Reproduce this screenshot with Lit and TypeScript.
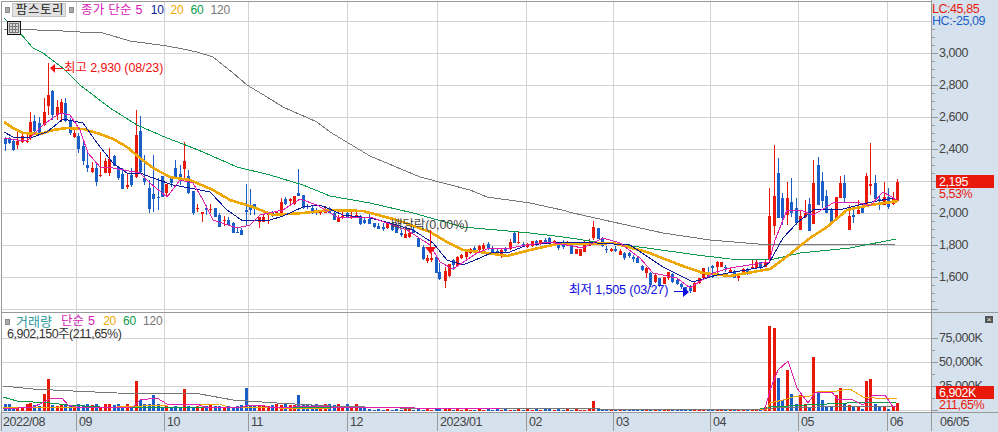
import { LitElement, html, css, svg } from "lit";
import { customElement } from "lit/decorators.js";

const RED = "#e8190a", BLUE = "#1a5fc8", ORANGE = "#f0a800", GREEN = "#0a9a4a", NAVY = "#0a1a9a", PINK = "#e020b0", GRAY = "#777777";

type Section = { ox: number; oy: number; rows: string };
const SECTIONS: Section[] = [
  { ox: 0, oy: 90, rows: "14 b 143 162 140 182;26 b 147 158 140 163;38 b 152 180 150 182;52 r 153 164 120 178;65 r 138 156 130 160;80 r 152 154 130 160;91 r 97 145 67 150;103 b 93 122 75 125;118 b 99 130 80 130;131 r 67 105 25 108;211 b 90 130 85 135;223 r 128 142 120 145;235 b 138 177 130 190;250 b 167 212 150 225;262 b 225 233 180 245;277 r 233 247 215 250;289 b 233 275 222 288;301 r 255 258 185 262;316 r 212 248 205 250;328 r 208 248 175 258;343 b 198 227 195 228;355 b 230 263 228 270;367 b 252 296 235 296;382 r 285 290 250 296;394 b 255 285 235 290;409 r 135 262 60 265;421 b 122 247 78 250;433 b 264 275 195 285;448 b 295 356 270 368;460 b 312 326 195 365;475 b 320 325 265 360;487 b 257 320 257 320;499 r 282 310 282 322;514 b 263 278 258 290;526 b 235 262 210 265;541 b 252 262 225 285;553 r 213 238 155 268;565 b 258 308 240 312;580 b 303 368 303 375;592 r 355 357 342 365" },
  { ox: 0, oy: 0, rows: "145 r 285 318 190 345;157 b 272 345 270 360;170 r 320 345 300 360;184 r 305 338 298 365;196 b 308 362 295 366" },
  { ox: 170, oy: 130, rows: "97 r 245 252 245 275;109 b 235 240 225 255;121 r 237 239 222 248;136 b 235 260 235 260;148 b 255 290 250 290;163 r 270 274 258 288;175 b 270 285 262 285;188 b 278 308 275 310;202 b 305 307 293 310;214 b 300 315 295 315;229 b 240 245 163 285;241 b 232 240 178 255;253 b 222 238 222 255;268 r 262 275 260 293;280 r 260 275 255 277;295 r 252 255 247 282;307 b 246 258 243 262;319 r 243 250 243 253;334 r 216 250 205 252;346 b 207 222 202 225;361 r 208 212 205 228;373 r 198 222 198 225;385 b 190 199 117 199;400 b 195 233 195 238;412 b 228 232 222 238;427 b 235 248 228 252;439 b 242 245 235 255;451 r 243 250 240 255;466 r 237 248 228 250;478 b 235 248 230 250;493 b 248 270 245 270;505 r 260 275 255 275;517 r 258 265 247 267;532 b 250 260 245 262;544 r 258 260 247 268;559 r 255 258 245 263;571 b 258 282 255 285;583 b 270 278 262 282" },
  { ox: 330, oy: 190, rows: "118 b 88 102 65 102;131 b 100 112 98 115;145 b 107 117 100 118;158 b 110 118 98 122;170 r 100 115 97 117;185 b 100 120 95 122;198 b 108 128 100 128;212 b 128 134 120 140;224 r 133 143 120 143;236 r 130 142 118 143;250 b 120 128 110 130;263 b 143 170 143 172;278 b 170 208 165 210;290 r 205 214 195 218;302 r 203 209 190 216;317 b 200 248 198 250;328 b 245 268 218 270;344 r 243 272 230 293;356 r 222 258 222 260;368 b 211 226 208 240;382 r 202 228 198 230;394 r 194 205 192 208;409 r 187 200 185 208;421 r 178 188 175 192;433 b 175 180 167 188;448 r 167 180 165 182;460 r 165 178 158 180;475 b 162 178 155 180;487 b 178 185 168 188;500 b 182 185 178 195;514 r 180 195 178 203;526 b 178 183 172 188;541 r 155 178 148 180;553 b 128 158 125 158;565 r 155 158 127 162;580 b 162 170 155 172;592 r 163 172 160 175" },
  { ox: 530, oy: 210, rows: "7 r 93 108 93 110;19 b 93 105 90 108;31 r 90 103 90 105;46 b 90 97 83 100;58 b 85 95 80 98;73 r 93 97 90 100;85 b 97 115 95 120;98 b 97 112 90 118;112 r 95 107 93 108;124 b 97 132 97 132;139 r 117 132 117 132;151 r 118 137 118 137;163 r 95 125 93 125;178 r 95 107 87 107;190 r 50 85 33 90;205 b 53 88 53 88;217 b 85 107 80 112;229 b 118 120 107 128;244 r 118 123 113 125;256 b 118 123 107 125;270 r 122 135 118 135;283 b 130 145 125 150;297 b 130 138 125 145;309 b 140 147 135 155;322 b 145 158 140 160;337 b 168 180 165 182;349 r 175 190 170 205;361 b 188 225 185 230;376 r 195 215 190 220;388 b 205 225 203 230;403 r 200 222 200 222;415 r 185 205 185 210;427 b 192 215 188 218;442 b 210 222 208 225;454 b 222 232 220 238;466 b 232 248 230 255;481 b 228 243 225 250;493 r 218 245 215 247;508 r 203 218 203 222;520 r 173 203 173 205;535 b 193 203 170 205;547 b 168 175 165 203;560 r 155 172 152 190;574 r 155 172 155 172;586 b 170 175 165 185;601 r 180 185 170 190;613 b 182 203 180 205;625 r 190 205 188 212;640 r 178 192 175 195;652 b 180 185 175 195;665 r 170 175 150 178;679 r 157 175 150 178;691 b 155 170 155 178;706 r 155 170 150 170" },
  { ox: 760, oy: 130, rows: "28 r 258 390 175 390;43 r 198 288 45 315;55 b 128 263 85 265;67 b 205 265 190 285;81 r 205 255 155 285;94 b 215 250 145 260;108 b 235 280 205 285;121 r 258 300 240 300;134 r 250 262 210 265;148 b 222 302 205 302;160 r 160 282 90 282;175 b 105 225 82 225;187 b 153 213 125 235;199 b 198 248 180 250;214 b 238 275 235 285;227 r 202 270 200 270;241 r 160 205 138 205;253 b 160 205 135 215;266 r 258 300 225 300;280 b 256 260 232 278;293 r 240 252 210 252;306 b 232 248 225 250;319 r 137 225 130 225;331 r 162 167 38 195;346 b 158 208 135 210;358 b 208 212 195 240;373 r 202 225 155 225;385 b 202 232 175 238;400 r 208 222 185 225;412 r 155 212 148 215" },
];

type Candle = { x: number; color: string; top: number; bot: number; hi: number; lo: number };
const CANDLES: Candle[] = SECTIONS.flatMap((s) =>
  s.rows.split(";").map((row) => {
    const [zx, c, t, b, h, l] = row.split(" ");
    const y = (v: string) => Math.round(s.oy + Number(v) / 3);
    return { x: Math.round(s.ox + Number(zx) / 3), color: c === "r" ? RED : BLUE, top: y(t), bot: y(b), hi: y(h), lo: y(l) };
  })
).sort((a, b) => a.x - b.x);

const MA120 = "4,29 21,29 37,30 63,31 80,32 103,33 130,41 167,46 183,49 197,52 213,57 233,73 247,85 267,97 283,107 317,122 330,132 370,156 420,177 470,190 487,197 530,203 562,210 573,213 613,222 663,233 710,240 770,245 800,244 850,245 896,244";
const MA60 = "4,18 20,33 33,48 43,53 63,68 80,85 110,108 137,125 167,138 183,144 203,152 237,167 270,175 303,185 330,196 370,203 413,213 463,227 530,233 563,237 597,242 647,248 697,255 730,259 770,260 800,253 850,248 896,239";
const MA20 = "4,122 13,128 23,133 40,134 53,130 67,128 83,129 100,134 113,139 127,147 140,158 153,168 170,177 190,180 213,190 230,200 253,207 273,215 303,213 330,210 363,211 397,220 430,232 447,242 463,250 480,252 507,256 530,250 557,244 583,244 613,243 647,252 680,265 703,273 730,276 770,269 785,258 810,238 827,227 847,210 870,205 898,201";
const MA10 = "4,132 13,137 33,137 47,132 63,119 83,123 97,143 113,163 127,173 140,173 153,178 173,185 190,188 210,192 227,210 243,221 270,220 283,216 303,207 320,205 343,215 370,218 390,223 413,230 433,243 447,260 463,265 480,258 493,252 510,252 527,245 563,242 597,243 630,245 663,267 693,282 717,275 763,267 769,263 783,238 797,223 813,210 843,209 867,203 893,198";
const MA5 = "4,138 17,140 28,140 43,125 60,113 70,115 80,130 88,153 100,167 113,168 140,173 150,183 167,197 180,180 193,183 203,200 213,220 237,228 250,225 260,215 283,210 300,199 317,205 337,217 370,217 407,230 430,245 440,262 453,269 477,253 490,248 510,248 527,245 550,242 583,248 603,238 620,243 640,258 653,273 677,278 690,288 713,273 730,268 769,262 775,240 787,210 800,210 813,215 833,203 857,202 870,206 883,192 897,200";

const VMA120 = "3,386 13,387 33,389 73,391 117,393 200,394 233,400 277,403 330,406 400,408 600,409 767,409 773,408 817,407 897,406";
const VMA60 = "3,397 17,401 33,402 50,403 67,405 100,407 200,407 330,407 500,409 760,409 770,407 807,405 847,403 897,402";
const VMA20 = "3,408 50,407 77,408 117,407 167,405 220,404 227,407 330,409 760,409 767,409 770,403 787,399 793,397 810,396 817,392 837,391 850,389 863,397 887,399 897,398";
const VMA5 = "3,409 33,407 42,403 50,399 62,398 68,405 80,408 133,407 140,400 157,398 167,404 197,404 207,408 243,407 248,405 263,405 270,408 293,407 300,406 330,407 500,409 765,409 770,390 778,370 788,361 797,388 808,403 815,393 832,392 837,399 853,400 863,405 872,396 885,395 893,407 897,406";

const VOL_PEAKS: [number, number][] = [
  [48, 379], [43, 394], [30, 403], [17, 407], [136, 381], [140, 400], [144, 404], [153, 395], [184, 389], [247, 388], [298, 395], [593, 401],
  [769, 326], [774, 328], [778, 378], [782, 400], [787, 370], [792, 394], [796, 404], [801, 395], [804, 404], [809, 407], [813, 357], [818, 393], [822, 400], [826, 407], [831, 407], [835, 395], [840, 388], [844, 403], [848, 405], [853, 407], [857, 407], [862, 409], [867, 381], [871, 379], [875, 404], [880, 407], [884, 406], [889, 409], [894, 407], [897, 403],
];

function volumeTop(x: number): number {
  const peak = VOL_PEAKS.find(([px]) => Math.abs(px - x) <= 2);
  if (peak) return peak[1];
  const hash = (x * 7 + (x % 5) * 3) % 4;
  return x < 365 ? 407 - hash : x < 765 ? 410 - (hash % 2) : 407;
}

const V_GRID = [76, 164, 248, 347, 437, 526, 613, 710, 798, 887];
const X_LABELS: [number, string][] = [[3, "2022/08"], [79, "09"], [167, "10"], [251, "11"], [350, "12"], [440, "2023/01"], [529, "02"], [616, "03"], [713, "04"], [801, "05"], [890, "06"]];
const MAIN_TICKS = Array.from({ length: 36 }, (_, i) => 29 + i * 8);
const PRICE_LABELS: [number, string][] = [[53, "3,000"], [85, "2,800"], [117, "2,600"], [149, "2,400"], [213, "2,000"], [245, "1,800"], [277, "1,600"]];
const VOL_LABELS: [number, string][] = [[338, "75,000K"], [362, "50,000K"], [386, "25,000K"]];

const line = (pts: string, color: string, w = 1) =>
  svg`<polyline points=${pts} fill="none" stroke=${color} stroke-width=${w} stroke-linejoin="round"></polyline>`;
const hline = (y: number, x1 = 2, x2 = 931) => svg`<line x1=${x1} x2=${x2} y1=${y + 0.5} y2=${y + 0.5}></line>`;
const vline = (x: number, y1: number, y2: number) => svg`<line x1=${x + 0.5} x2=${x + 0.5} y1=${y1} y2=${y2}></line>`;

@customElement("app-root")
export class AppRoot extends LitElement {
  static styles = css`
    :host { display: block; width: 998px; height: 432px; overflow: hidden; background: #fff;
      font-family: "Liberation Sans", "Noto Sans CJK KR", sans-serif; }
    .frame { display: grid; grid-template-columns: 931px 67px; grid-template-rows: 313px 99px 20px; width: 998px; height: 432px; }
    .plot, .axis { position: relative; overflow: hidden; }
    .axis { background: #d6e1ee; }
    .x-axis { grid-column: 1 / 3; }
    svg.layer { position: absolute; left: 0; top: 0; display: block; }
    .grid line { stroke: #d2d2d2; stroke-width: 1; shape-rendering: crispEdges; }
    .frame-lines line { stroke: #999; stroke-width: 1; shape-rendering: crispEdges; }
    .series { shape-rendering: crispEdges; }
    .marks text { font-size: 12.5px; letter-spacing: -0.1px; }
    .axis text { font-size: 12.5px; letter-spacing: -0.45px; fill: #444; }
    .axis text.lc { fill: #e8190a; }
    .axis text.hc { fill: #1a5fc8; }
    .axis text.on-badge { fill: #fff; }
    .axis text.change { fill: #e8190a; }
    .legend { position: relative; display: flex; align-items: center; height: 14px; margin: 3px 0 0 5px; font-size: 12.5px; line-height: 13px; white-space: nowrap; }
    .bullet { flex: none; width: 3px; height: 4px; background: #a9a9a9; border: 1px solid #8c8c8c; box-sizing: content-box; }
    .title { flex: none; margin: 0 3px 0 2px; width: 54px; height: 14px; padding-left: 2px; box-sizing: border-box; background: #e2e2e2; border: 1px solid #c4c4c4;
      display: flex; align-items: center; justify-content: center; letter-spacing: 0.6px; color: #222; }
    .name { color: #d620b8; margin-left: 7px; letter-spacing: 0.25px; }
    .group { display: flex; gap: 7px; margin-left: 8px; letter-spacing: -0.2px; font-size: 12px; }
    .n10 { color: #0a1a9a; } .n20 { color: #f0a800; } .n60 { color: #0a9a4a; } .n120 { color: #777; }
    .grid-btn { position: relative; width: 14px; height: 14px; margin: 4px 0 0 7px; box-sizing: border-box; background: #d8d8d8; border: 1px solid #111; }
    .grid-btn svg { display: block; }
    .vol-legend { position: relative; display: flex; align-items: center; height: 13px; margin: 2px 0 1px 5px; font-size: 13px; line-height: 13px; white-space: nowrap; }
    .vol-name { color: #2a9a9a; margin-left: 6px; }
    .vol-simple { color: #d620b8; margin-left: 9px; font-size: 12.5px; letter-spacing: 0.2px; }
    .vol-nums { display: flex; gap: 7px; margin-left: 8px; letter-spacing: -0.2px; font-size: 12px; }
    .vol-value { position: relative; margin: 0 0 0 7px; font-size: 12.5px; color: #333; letter-spacing: -0.5px; line-height: 11px; white-space: nowrap; }
    .close { position: absolute; left: 54px; top: 3px; width: 8px; height: 7px; background: #555; color: #fff; font-size: 8px; line-height: 7px; text-align: center; }
  `;

  render() {
    return html`
      <div class="frame">
        <div class="plot">
          <svg class="layer" width="931" height="313" viewBox="0 0 931 313">
            <g class="grid">
              ${[21, 53, 85, 117, 149, 181, 213, 245, 277, 309].map((y) => hline(y))}
              ${V_GRID.map((x) => vline(x, 2, 312))}
            </g>
            <g class="series">
              ${CANDLES.map((c) => svg`
                <rect x=${c.x} y=${c.hi} width="1" height=${Math.max(1, c.lo - c.hi)} fill=${c.color}></rect>
                <rect x=${c.x - 1} y=${c.top} width="3" height=${Math.max(1, c.bot - c.top)} fill=${c.color}></rect>`)}
              ${line(MA120, GRAY)}${line(MA60, GREEN)}${line(MA20, ORANGE, 2.6)}${line(MA10, NAVY)}${line(MA5, PINK)}
            </g>
            <g class="marks">
              <polygon points="50,68 55,64 55,73" fill="#f01010"></polygon>
              <rect x="54" y="68" width="9" height="1" fill="#f01010"></rect>
              <text x="64" y="72" fill="#f01010">최고 2,930 (08/23)</text>
              <text x="391" y="229" fill="#444">배당락(0,00%)</text>
              <rect x="430" y="230" width="1" height="18" fill="#f01010"></rect>
              <polygon points="425,247 436,247 430.5,254" fill="#f01010"></polygon>
              <text x="569" y="294" fill="#0a0ae0">최저 1,505 (03/27)</text>
              <rect x="674" y="291" width="9" height="1" fill="#0a0ae0"></rect>
              <polygon points="683,287 683,297 689,292" fill="#0a0ae0"></polygon>
            </g>
            <g class="frame-lines">
              ${hline(1, 1)}${hline(312, 1)}${vline(1, 1, 313)}
            </g>
          </svg>
          <div class="legend">
            <span class="bullet"></span>
            <span class="title">팜스토리</span>
            <span class="bullet"></span>
            <span class="name">종가 단순 5</span>
            <span class="group"><span class="n10">10</span><span class="n20">20</span><span class="n60">60</span><span class="n120">120</span></span>
          </div>
          <div class="grid-btn">
            <svg width="12" height="12" viewBox="0 0 12 12"><path d="M1 1.5h10M1 4.5h10M1 7.5h10M1 10.5h10M1.5 1v10M4.5 1v10M7.5 1v10M10.5 1v10" stroke="#7a7a7a" stroke-width="1" fill="none"></path></svg>
          </div>
        </div>
        <div class="axis">
          <svg class="layer" width="67" height="313" viewBox="931 0 67 313">
            <g class="frame-lines">
              ${vline(931, 0, 313)}${hline(312, 931, 998)}
              ${MAIN_TICKS.map((y) => hline(y, 932, (y - 29) % 32 === 24 ? 938 : 935))}
            </g>
            ${PRICE_LABELS.map(([y, t]) => svg`<text x="939" y=${y + 4}>${t}</text>`)}
            <text class="lc" x="932" y="13">LC:45,85</text>
            <text class="hc" x="932" y="25">HC:-25,09</text>
            <rect x="936" y="175" width="58" height="13" fill=${RED}></rect>
            <text class="on-badge" x="939" y="186">2,195</text>
            <text class="change" x="939" y="198">5,53%</text>
          </svg>
        </div>
        <div class="plot">
          <svg class="layer" width="931" height="99" viewBox="0 313 931 99">
            <g class="grid">
              ${[338, 362, 386, 410].map((y) => hline(y))}
              ${V_GRID.map((x) => vline(x, 313, 412))}
            </g>
            <g class="series">
              ${CANDLES.map((c) => {
                const top = volumeTop(c.x);
                return svg`<rect x=${c.x - 1} y=${top} width="3" height=${411 - top} fill=${c.color}></rect>`;
              })}
              ${line(VMA120, GRAY)}${line(VMA60, GREEN)}${line(VMA20, ORANGE)}${line(VMA5, PINK)}
            </g>
            <g class="frame-lines">${vline(1, 313, 412)}</g>
          </svg>
          <div class="vol-legend">
            <span class="bullet"></span>
            <span class="vol-name">거래량</span>
            <span class="vol-simple">단순 5</span>
            <span class="vol-nums"><span class="n20">20</span><span class="n60">60</span><span class="n120">120</span></span>
          </div>
          <div class="vol-value">6,902,150주(211,65%)</div>
        </div>
        <div class="axis">
          <svg class="layer" width="67" height="99" viewBox="931 313 67 99">
            <g class="frame-lines">
              ${vline(931, 313, 412)}
              ${[338, 350, 362, 374, 386, 398, 410].map((y) => hline(y, 932, (y - 338) % 24 === 0 ? 938 : 935))}
            </g>
            ${VOL_LABELS.map(([y, t]) => svg`<text x="939" y=${y + 4}>${t}</text>`)}
            <rect x="936" y="386" width="58" height="13" fill=${RED}></rect>
            <text class="on-badge" x="939" y="397">6,902K</text>
            <text class="change" x="939" y="409">211,65%</text>
          </svg>
          <div class="close">×</div>
        </div>
        <div class="axis x-axis">
          <svg class="layer" width="998" height="20" viewBox="0 412 998 20">
            <g class="frame-lines">
              ${hline(412, 1, 998)}${vline(1, 412, 431)}
              ${V_GRID.map((x) => vline(x, 412, 431))}
              ${vline(931, 412, 431)}
            </g>
            ${X_LABELS.map(([x, t]) => svg`<text x=${x} y="425.5">${t}</text>`)}
            <text x="940" y="425.5">06/05</text>
          </svg>
        </div>
      </div>
    `;
  }
}
